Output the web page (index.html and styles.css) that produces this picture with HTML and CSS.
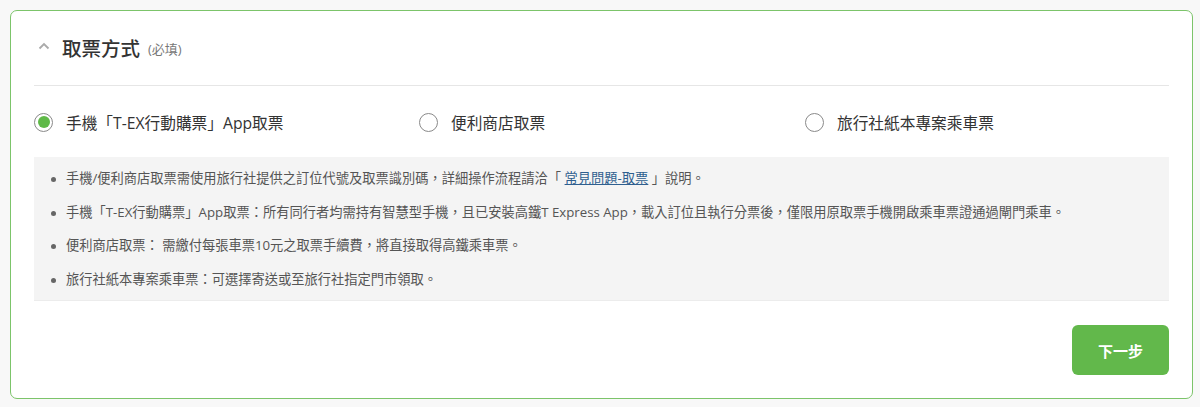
FILE: index.html
```html
<!DOCTYPE html>
<html lang="zh-Hant">
<head>
<meta charset="utf-8">
<link rel="stylesheet" href="styles.css">
</head>
<body>
<div class="card">
  <div class="header">
    <svg class="chev" width="12" height="8" viewBox="0 0 12 8"><path d="M1.5 6.5 L6 2 L10.5 6.5" fill="none" stroke="#aaa" stroke-width="1.8"/></svg>
    <span class="title">取票方式</span>
    <span class="req">(必填)</span>
  </div>
  <div class="divider"></div>
  <div class="options">
    <label class="opt"><span class="radio checked"></span><span>手機「T-EX行動購票」App取票</span></label>
    <label class="opt"><span class="radio"></span><span>便利商店取票</span></label>
    <label class="opt"><span class="radio"></span><span>旅行社紙本專案乘車票</span></label>
  </div>
  <ul class="info">
    <li>手機/便利商店取票需使用旅行社提供之訂位代號及取票識別碼，詳細操作流程請洽「 <a href="#">常見問題-取票</a> 」說明。</li>
    <li>手機「T-EX行動購票」App取票：所有同行者均需持有智慧型手機，且已安裝高鐵T Express App，載入訂位且執行分票後，僅限用原取票手機開啟乘車票證通過閘門乘車。</li>
    <li>便利商店取票： 需繳付每張車票10元之取票手續費，將直接取得高鐵乘車票。</li>
    <li>旅行社紙本專案乘車票：可選擇寄送或至旅行社指定門市領取。</li>
  </ul>
  <div class="actions">
    <button class="next">下一步</button>
  </div>
</div>
</body>
</html>
```

FILE: styles.css
```css
html, body {
  margin: 0;
  padding: 0;
  background: #f8f8f8;
}
body {
  padding: 10px 7px 8px 10px;
  font-family: "Open Sans", "Noto Sans CJK TC", sans-serif;
  color: #333;
}
.card {
  background: #fff;
  border: 1px solid #7cc46a;
  border-radius: 7px;
  padding: 0 23px 22px 23px;
  height: 389px;
  box-sizing: border-box;
}
.header {
  display: flex;
  align-items: center;
  height: 72px;
  padding-left: 4px;
  padding-bottom: 2px;
}
.chev {
  margin-right: 12px;
  margin-top: -2px;
}
.title {
  font-size: 19.5px;
  font-weight: 500;
  color: #333;
}
.req {
  font-size: 13px;
  color: #777;
  margin-left: 8px;
  margin-top: 2px;
}
.divider {
  height: 1px;
  background: #e6e6e6;
}
.options {
  display: grid;
  grid-template-columns: 385px 386px 1fr;
  padding: 25px 0 0 0;
  height: 46px;
}
.opt {
  display: flex;
  align-items: center;
  gap: 13px;
  font-size: 15.7px;
  color: #333;
  height: 22px;
}
.radio {
  width: 19px;
  height: 19px;
  border: 1.5px solid #8a8a8a;
  border-radius: 50%;
  box-sizing: border-box;
  display: flex;
  align-items: center;
  justify-content: center;
  flex: none;
}
.radio.checked::after {
  content: "";
  width: 12px;
  height: 12px;
  border-radius: 50%;
  background: #5fb948;
}
.info {
  margin: 0;
  background: #f4f4f4;
  padding: 5px 0 4px 32px;
  list-style: none;
  border-bottom: 1px solid #ececec;
}
.info li {
  position: relative;
  font-size: 13.25px;
  color: #555;
  line-height: 33.5px;
}
.info li::before {
  content: "";
  position: absolute;
  left: -15px;
  top: 15px;
  width: 5px;
  height: 5px;
  border-radius: 50%;
  background: #666;
}
.info a {
  color: #2f5f8f;
  text-decoration: underline;
}
.actions {
  display: flex;
  justify-content: flex-end;
  padding-top: 24px;
}
.next {
  width: 97px;
  height: 50px;
  border: none;
  border-radius: 6px;
  background: #62b84b;
  color: #fff;
  font-family: "Noto Sans CJK TC", sans-serif;
  font-size: 15px;
  font-weight: 700;
}
```
